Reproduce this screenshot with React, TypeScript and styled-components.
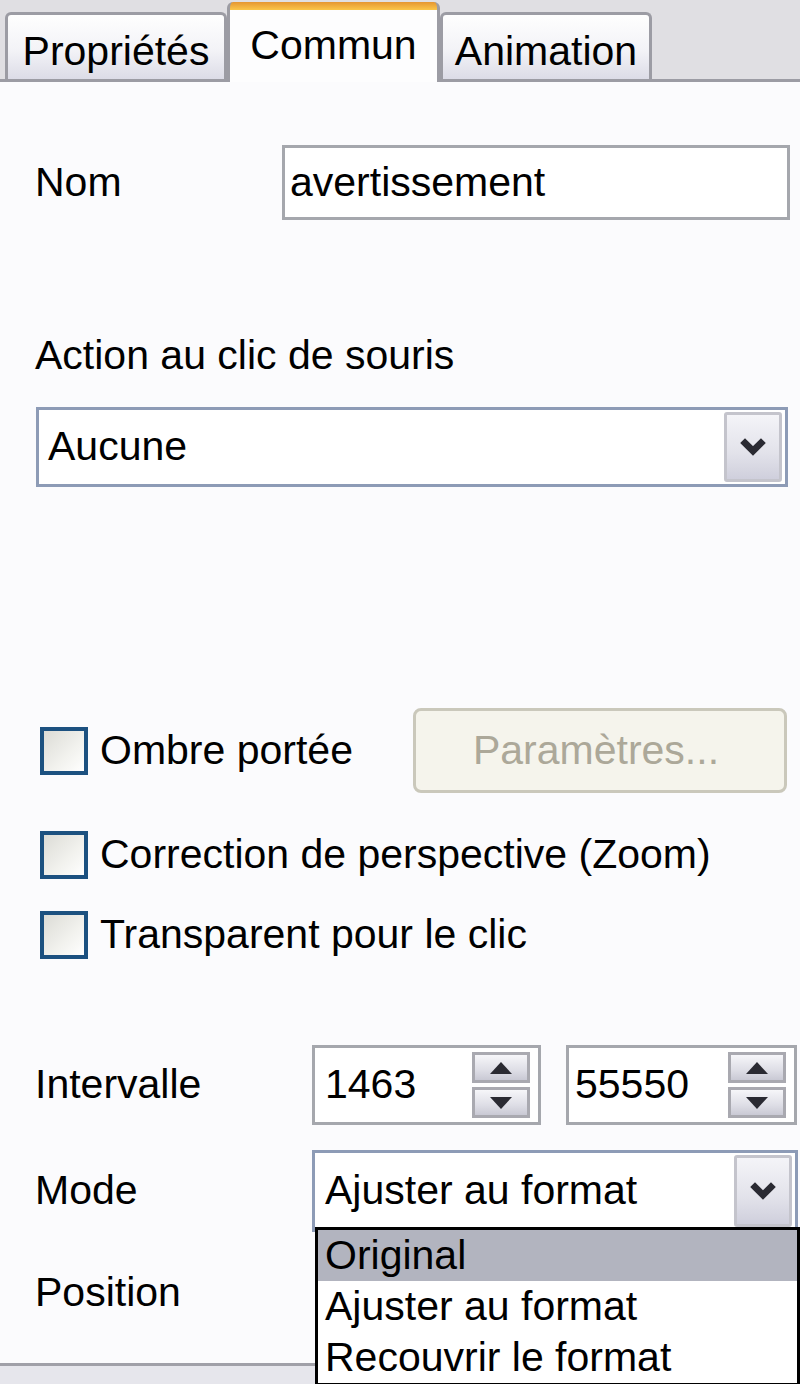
import React from 'react';
import styled, { createGlobalStyle } from 'styled-components';

const GlobalStyle = createGlobalStyle`
  html, body {
    margin: 0;
    padding: 0;
  }
  body {
    background: #e0dfe3;
    font-family: "Liberation Sans", Arial, sans-serif;
  }
`;

const Window = styled.div`
  width: 800px;
  height: 1384px;
  overflow: hidden;
  display: flex;
  flex-direction: column;
  background: #e0dfe3;
  font-size: 41px;
  line-height: 1.15;
  color: #000;
`;

const TabStrip = styled.div`
  height: 82px;
  box-sizing: border-box;
  display: flex;
  align-items: flex-end;
  padding-left: 5px;
  border-bottom: 3px solid #9c9ca4;
`;

const Tab = styled.div<{ $active?: boolean; $width: number }>`
  box-sizing: border-box;
  width: ${({ $width }) => $width}px;
  height: ${({ $active }) => ($active ? 80 : 67)}px;
  margin-bottom: ${({ $active }) => ($active ? -3 : 0)}px;
  display: flex;
  align-items: center;
  justify-content: center;
  border: 3px solid #9c9ca4;
  border-bottom: none;
  border-radius: 6px 6px 0 0;
  padding-top: ${({ $active }) => ($active ? 8 : 9)}px;
  background: ${({ $active }) =>
    $active
      ? 'linear-gradient(#e59632 0, #fbc64a 8px, #fdfdfe 8px)'
      : 'linear-gradient(#fefefe, #f3f3f7 55%, #dcdce7)'};
  border-top: ${({ $active }) => ($active ? 'none' : '3px solid #9c9ca4')};
  position: relative;
`;

const Panel = styled.div`
  flex: 1;
  background: #fbfbfd;
  border-bottom: 3px solid #a0a0a8;
  padding: 0 0 0 35px;
  display: flex;
  flex-direction: column;
`;

const Footer = styled.div`
  height: 18px;
  background: #e6e6ec;
`;

const Row = styled.div<{ $top: number; $height: number }>`
  margin-top: ${({ $top }) => $top}px;
  height: ${({ $height }) => $height}px;
  display: flex;
  align-items: center;
  position: relative;
`;

const Label = styled.div<{ $width?: number }>`
  width: ${({ $width }) => ($width ? `${$width}px` : 'auto')};
  flex-shrink: 0;
  white-space: nowrap;
`;

const Heading = styled.div<{ $top: number }>`
  margin-top: ${({ $top }) => $top}px;
  line-height: 48px;
  white-space: nowrap;
`;

const TextBox = styled.div<{ $width: number }>`
  box-sizing: border-box;
  width: ${({ $width }) => $width}px;
  height: 100%;
  border: 3px solid #a5a7ad;
  background: #fff;
  display: flex;
  align-items: center;
  padding-left: 5px;
`;

const Combo = styled.div<{ $width: number; $left?: number }>`
  box-sizing: border-box;
  width: ${({ $width }) => $width}px;
  height: 100%;
  margin-left: ${({ $left }) => $left ?? 0}px;
  border: 3px solid #8d9bb6;
  background: #fff;
  display: flex;
  align-items: center;
  position: relative;
`;

const ComboText = styled.div<{ $pad: number }>`
  flex: 1;
  padding-left: ${({ $pad }) => $pad}px;
  white-space: nowrap;
`;

const DropButton = styled.div`
  align-self: stretch;
  width: 58px;
  margin: 2px 3px 2px 0;
  box-sizing: border-box;
  border: 3px solid #c4c4cc;
  border-radius: 3px;
  background: linear-gradient(#f4f4f8, #e2e2ea 60%, #cfcfdc);
  display: flex;
  align-items: center;
  justify-content: center;
`;

const DropList = styled.div`
  position: absolute;
  top: calc(100% - 2px);
  left: 0;
  width: 485px;
  box-sizing: border-box;
  border: 3px solid #000;
  background: #fff;
  z-index: 5;
`;

const DropItem = styled.div<{ $selected?: boolean }>`
  height: 51px;
  line-height: 51px;
  padding-left: 7px;
  background: ${({ $selected }) => ($selected ? '#b2b4bf' : '#fff')};
  white-space: nowrap;
`;

const CheckBox = styled.div<{ $left?: number }>`
  box-sizing: border-box;
  width: 48px;
  height: 48px;
  margin-left: ${({ $left }) => $left ?? 5}px;
  margin-right: 12px;
  flex-shrink: 0;
  border: 4px solid #1c5180;
  background: linear-gradient(135deg, #dcdcd6, #f2f2ee 60%, #fff);
`;

const DisabledButton = styled.div`
  box-sizing: border-box;
  width: 374px;
  height: 100%;
  margin-left: auto;
  margin-right: 13px;
  border: 3px solid #cac8bb;
  border-radius: 8px;
  background: #f5f4ec;
  color: #aca899;
  display: flex;
  align-items: center;
  justify-content: center;
  padding-right: 8px;
`;

const SpinBox = styled.div<{ $width: number; $gap?: number }>`
  box-sizing: border-box;
  width: ${({ $width }) => $width}px;
  height: 100%;
  margin-left: ${({ $gap }) => $gap ?? 0}px;
  border: 3px solid #a5a7ad;
  background: #fff;
  display: flex;
  align-items: center;
`;

const SpinValue = styled.div<{ $pad: number }>`
  flex: 1;
  padding-left: ${({ $pad }) => $pad}px;
`;

const SpinButtons = styled.div`
  align-self: stretch;
  width: 58px;
  margin: 4px 8px 4px 0;
  display: flex;
  flex-direction: column;
  justify-content: space-between;
`;

const SpinButton = styled.div`
  box-sizing: border-box;
  height: 31px;
  border: 3px solid #a9a9b0;
  background: linear-gradient(#f6f6f9, #dedee6 60%, #c9c9d4);
  display: flex;
  align-items: center;
  justify-content: center;
`;

const Chevron = () => (
  <svg width="28" height="20" viewBox="0 0 14 10">
    <polyline points="1.8,1.8 7,7 12.2,1.8" fill="none" stroke="#2a2a32" strokeWidth="3.4" strokeLinejoin="miter" />
  </svg>
);

const Arrow = ({ up }: { up?: boolean }) => (
  <svg width="26" height="14" viewBox="0 0 13 7">
    {up ? (
      <polygon points="6.5,0.5 12,6.5 1,6.5" fill="#2a2a32" />
    ) : (
      <polygon points="1,0.5 12,0.5 6.5,6.5" fill="#2a2a32" />
    )}
  </svg>
);

const Spin = ({ value, width, gap, pad }: { value: string; width: number; gap?: number; pad: number }) => (
  <SpinBox $width={width} $gap={gap}>
    <SpinValue $pad={pad}>{value}</SpinValue>
    <SpinButtons>
      <SpinButton>
        <Arrow up />
      </SpinButton>
      <SpinButton>
        <Arrow />
      </SpinButton>
    </SpinButtons>
  </SpinBox>
);

const App: React.FC = () => {
  return (
    <Window>
      <GlobalStyle />
      <TabStrip>
        <Tab $width={222}>Propriétés</Tab>
        <Tab $width={213} $active>
          Commun
        </Tab>
        <Tab $width={212}>Animation</Tab>
      </TabStrip>

      <Panel>
        <Row $top={63} $height={75}>
          <Label $width={247}>Nom</Label>
          <TextBox $width={508}>avertissement</TextBox>
        </Row>

        <Heading $top={111}>Action au clic de souris</Heading>

        <Row $top={28} $height={80}>
          <Combo $width={752} $left={1}>
            <ComboText $pad={9}>Aucune</ComboText>
            <DropButton>
              <Chevron />
            </DropButton>
          </Combo>
        </Row>

        <Row $top={221} $height={85}>
          <CheckBox />
          <Label>Ombre portée</Label>
          <DisabledButton>Paramètres...</DisabledButton>
        </Row>
        <Row $top={22} $height={80}>
          <CheckBox />
          <Label>Correction de perspective (Zoom)</Label>
        </Row>
        <Row $top={0} $height={80}>
          <CheckBox />
          <Label>Transparent pour le clic</Label>
        </Row>

        <Row $top={70} $height={80}>
          <Label $width={277}>Intervalle</Label>
          <Spin value="1463" width={229} pad={10} />
          <Spin value="55550" width={231} gap={25} pad={6} />
        </Row>

        <Row $top={25} $height={82}>
          <Label $width={277}>Mode</Label>
          <Combo $width={486}>
            <ComboText $pad={10}>Ajuster au format</ComboText>
            <DropButton>
              <Chevron />
            </DropButton>
            <DropList>
              <DropItem $selected>Original</DropItem>
              <DropItem>Ajuster au format</DropItem>
              <DropItem>Recouvrir le format</DropItem>
            </DropList>
          </Combo>
        </Row>

        <Row $top={21} $height={80}>
          <Label $width={277}>Position</Label>
        </Row>
      </Panel>
      <Footer />
    </Window>
  );
};

export default App;
